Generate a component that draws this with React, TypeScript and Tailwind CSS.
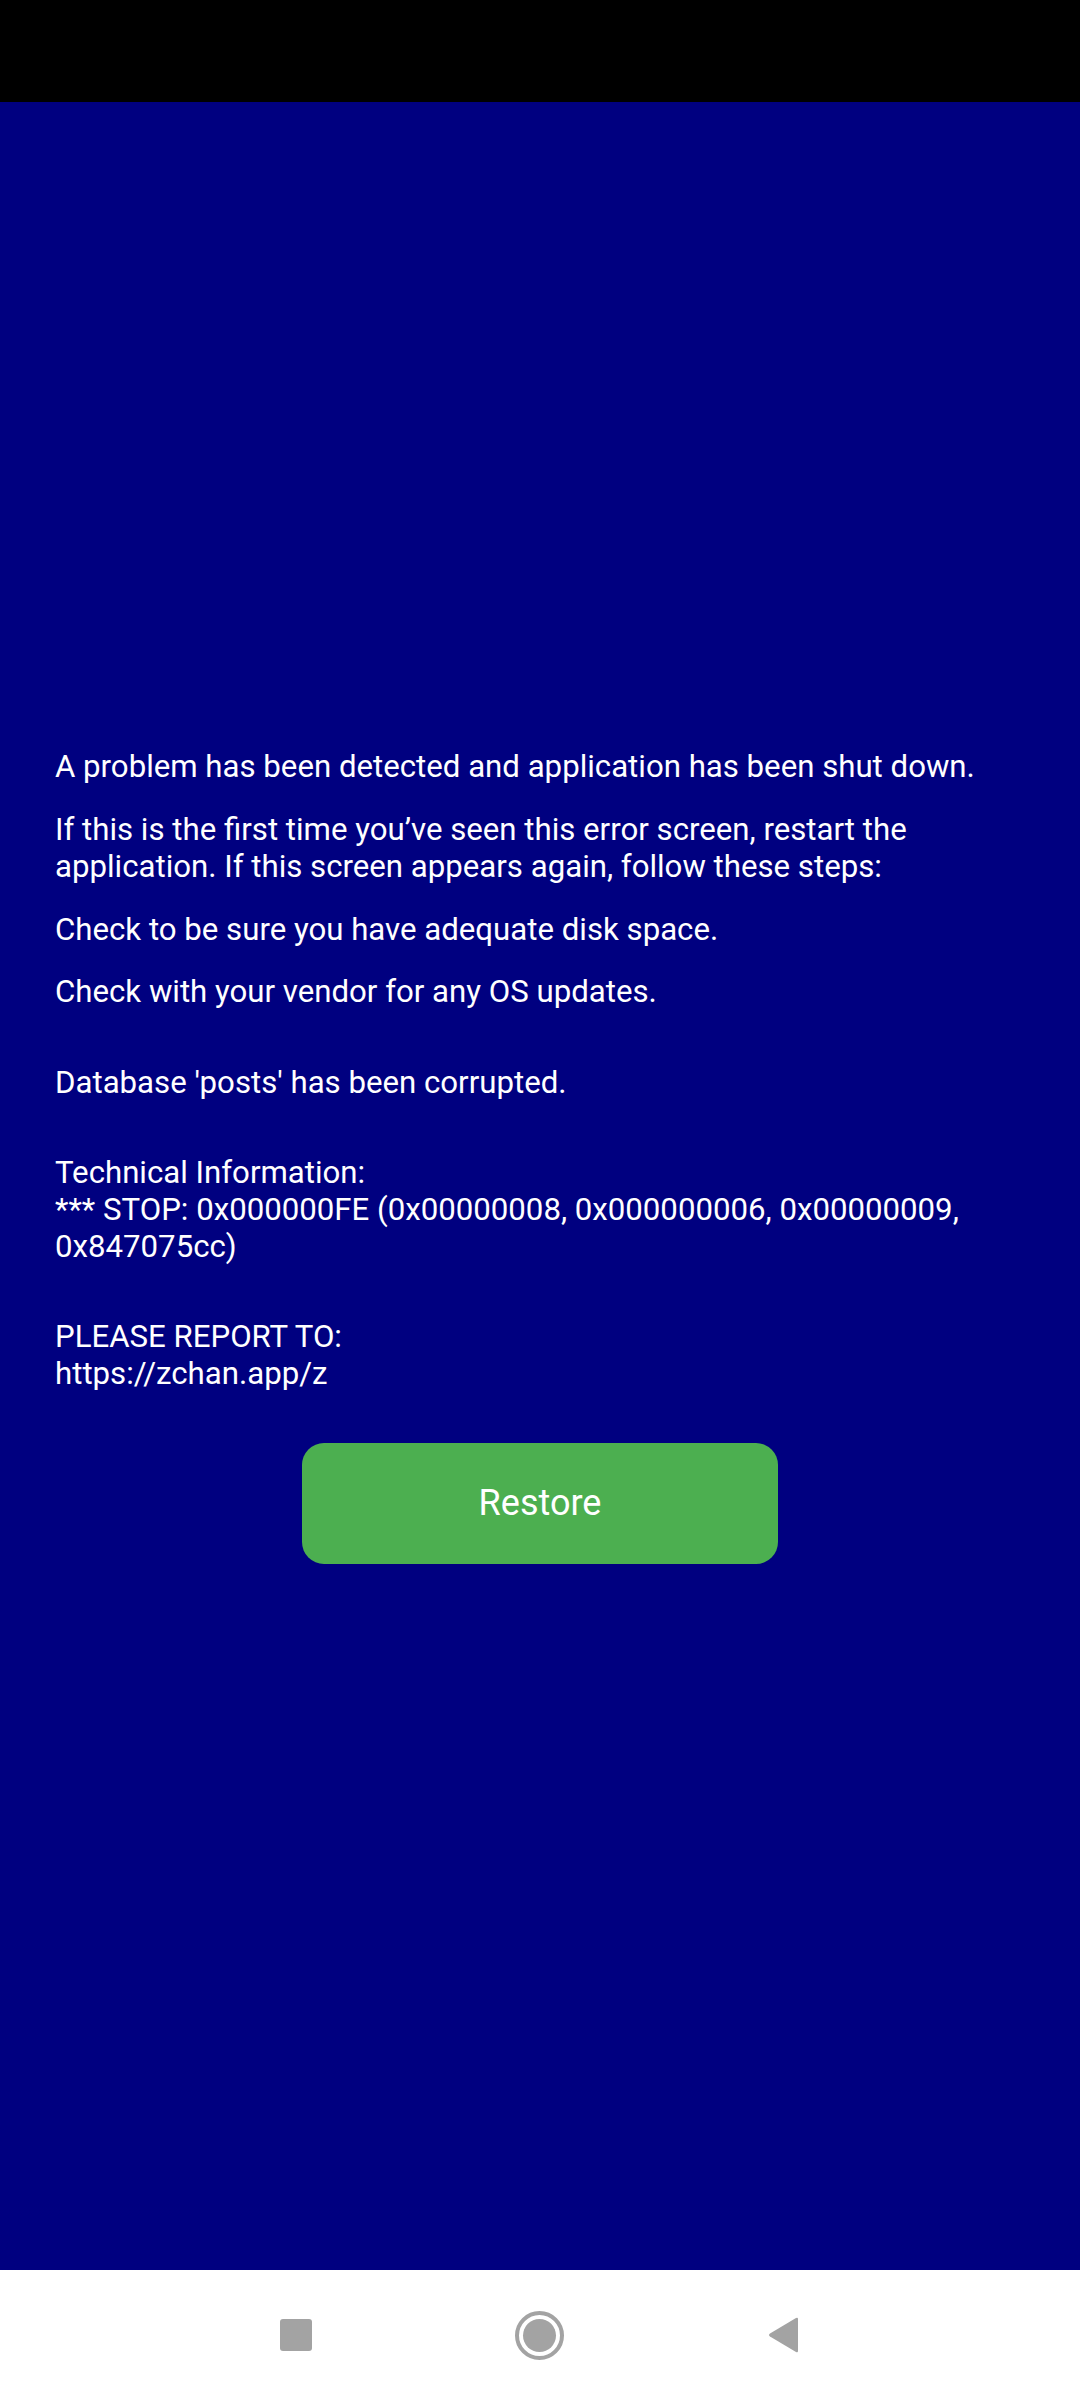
import * as React from "react";

const font = { fontFamily: "Roboto, 'Liberation Sans', sans-serif" };

export default function App() {
  return (
    <div className="flex h-[2400px] w-[1080px] flex-col bg-[#000080]" style={font}>
      <div className="h-[102px] shrink-0 bg-black" />

      <main className="flex-1 px-[55px] pt-[646px] text-[31.2px] leading-[37px] text-white">
        <p>A problem has been detected and application has been shut down.</p>
        <p className="mt-[26px]">
          If this is the first time you’ve seen this error screen, restart the application. If this
          screen appears again, follow these steps:
        </p>
        <p className="mt-[26px]">Check to be sure you have adequate disk space.</p>
        <p className="mt-[25px]">Check with your vendor for any OS updates.</p>
        <p className="mt-[54px]">Database 'posts' has been corrupted.</p>
        <p className="mt-[53px]">
          Technical Information:
          <br />
          *** STOP: 0x000000FE (0x00000008, 0x000000006, 0x00000009, 0x847075cc)
        </p>
        <p className="mt-[53px]">
          PLEASE REPORT TO:
          <br />
          https://zchan.app/z
        </p>

        <div className="mt-[51px] flex justify-center">
          <button className="h-[121px] w-[476px] rounded-[22px] bg-[#4caf50] text-[36px] text-white">
            Restore
          </button>
        </div>
      </main>

      <nav className="flex h-[130px] shrink-0 items-center justify-center bg-white">
        <div className="flex w-[520px] items-center justify-between">
          <div className="h-[32px] w-[32px] rounded-[3px] bg-[#a3a3a3]" />
          <div className="flex h-[49px] w-[49px] items-center justify-center rounded-full border-[4px] border-[#a3a3a3]">
            <div className="h-[33px] w-[33px] rounded-full bg-[#a3a3a3]" />
          </div>
          <svg width="34" height="38" viewBox="0 0 34 38">
            <path d="M30 2 L4 17.5 Q2 19 4 20.5 L30 36 Q32 37 32 35 L32 3 Q32 1 30 2 Z" fill="#a3a3a3" />
          </svg>
        </div>
      </nav>
    </div>
  );
}
